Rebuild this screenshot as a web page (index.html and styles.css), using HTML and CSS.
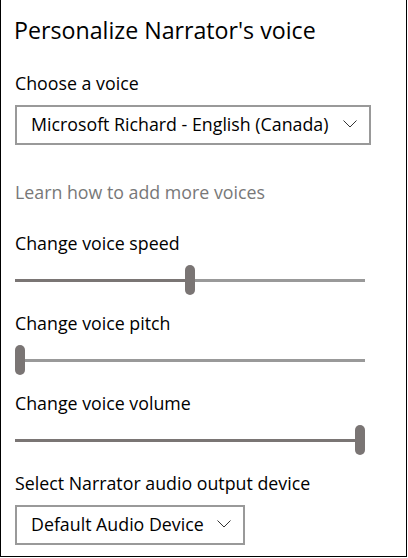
FILE: index.html
```html
<!DOCTYPE html>
<html>
<head>
<meta charset="utf-8">
<link rel="stylesheet" href="styles.css">
</head>
<body>
<div class="panel">
  <h1 class="title">Personalize Narrator's voice</h1>
  <div class="label first">Choose a voice</div>
  <div class="dropdown voice">
    <span class="dd-text">Microsoft Richard - English (Canada)</span>
    <svg class="chev" width="14" height="8" viewBox="0 0 14 8"><polyline points="0.5,0.5 7,7 13.5,0.5" fill="none" stroke="#333" stroke-width="1"/></svg>
  </div>
  <div class="link">Learn how to add more voices</div>
  <div class="label after-link">Change voice speed</div>
  <div class="slider">
    <div class="track"><div class="fill" style="width:50%"></div></div>
    <div class="thumb" style="left:170px"></div>
  </div>
  <div class="label">Change voice pitch</div>
  <div class="slider">
    <div class="track"><div class="fill" style="width:0%"></div></div>
    <div class="thumb" style="left:0px"></div>
  </div>
  <div class="label">Change voice volume</div>
  <div class="slider">
    <div class="track"><div class="fill" style="width:100%"></div></div>
    <div class="thumb" style="left:340px"></div>
  </div>
  <div class="label">Select Narrator audio output device</div>
  <div class="dropdown device">
    <span class="dd-text">Default Audio Device</span>
    <svg class="chev" width="14" height="8" viewBox="0 0 14 8"><polyline points="0.5,0.5 7,7 13.5,0.5" fill="none" stroke="#333" stroke-width="1"/></svg>
  </div>
</div>
</body>
</html>
```

FILE: styles.css
```css
html, body {
  margin: 0;
  padding: 0;
  background: #fff;
}

.panel {
  box-sizing: border-box;
  width: 407px;
  height: 557px;
  border-left: 1px solid #000;
  border-right: 1px solid #000;
  border-bottom: 1px solid #000;
  padding: 14px 0 0 14px;
  font-family: "Open Sans", "Noto Sans", sans-serif;
  color: #000;
  display: flex;
  flex-direction: column;
  align-items: flex-start;
}

.title {
  margin: 0 0 0 -1px;
  font-size: 23.2px;
  font-weight: 400;
  line-height: 32px;
}

.label {
  font-size: 17.8px;
  line-height: 24px;
  margin-top: 16px;
}

.label.first {
  margin-top: 25px;
}

.label.after-link {
  margin-top: 27px;
}

.link {
  font-size: 17.8px;
  line-height: 24px;
  color: #787878;
  margin-top: 35px;
}

.dropdown {
  box-sizing: border-box;
  height: 40px;
  margin-top: 10px;
  border: 2px solid #999;
  display: flex;
  align-items: center;
  justify-content: space-between;
  padding: 0 12px 0 14px;
  font-size: 17.8px;
}

.dropdown.voice {
  width: 356px;
}

.dropdown.device {
  width: 230px;
}

.dd-text {
  line-height: 24px;
  margin-top: -2px;
}

.chev {
  display: block;
  margin-top: -2px;
}

.slider {
  position: relative;
  width: 350px;
  height: 30px;
  margin-top: 10px;
  display: flex;
  align-items: center;
}

.track {
  width: 100%;
  height: 3px;
  background: #999;
}

.fill {
  height: 100%;
  background: #7a7574;
}

.thumb {
  position: absolute;
  top: 0;
  width: 10px;
  height: 30px;
  border-radius: 5px;
  background: #7a7574;
}
```
